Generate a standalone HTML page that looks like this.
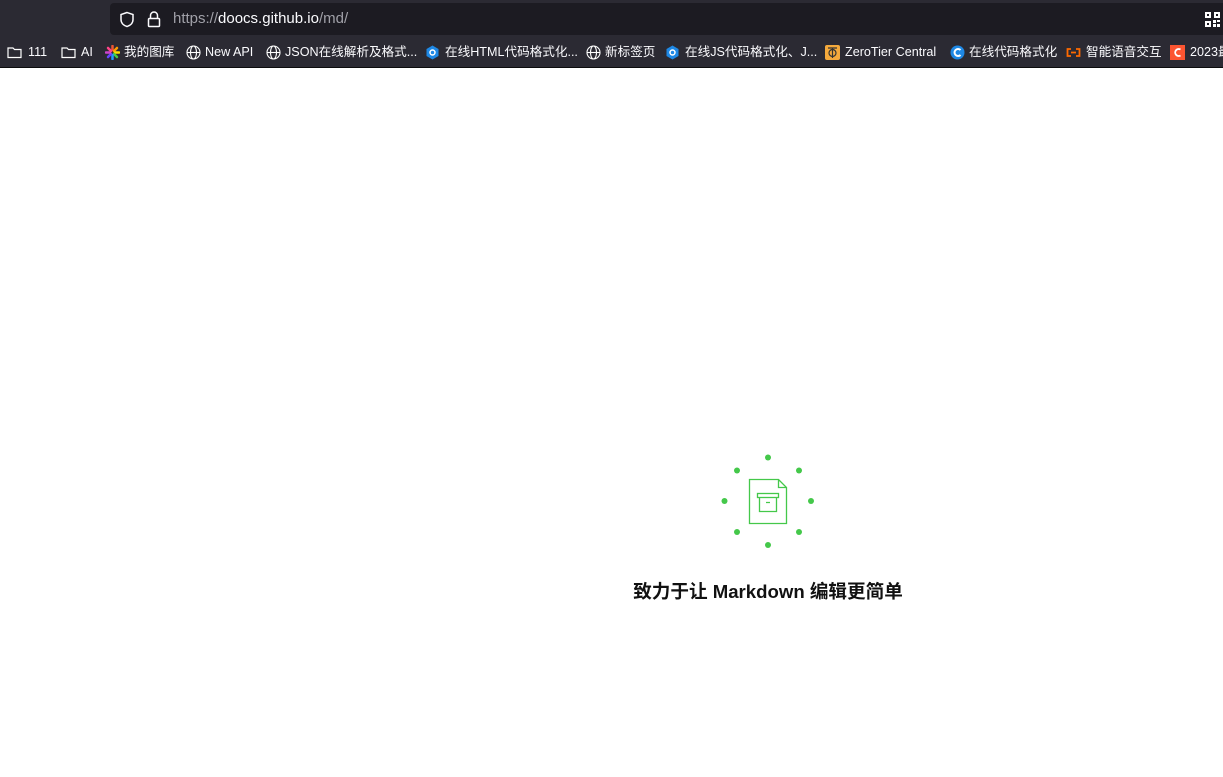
<!DOCTYPE html>
<html><head><meta charset="utf-8"><style>
*{margin:0;padding:0;box-sizing:border-box}
body{width:1223px;height:777px;background:#fff;font-family:"Liberation Sans","Noto Sans CJK SC",sans-serif;position:relative;overflow:hidden}
#top{position:absolute;left:0;top:0;width:1223px;height:36px;background:#2b2a33}
#url{position:absolute;left:110px;top:3px;width:1113px;height:32px;background:#1c1b22;border-radius:4px 0 0 4px}
#url .t{position:absolute;left:63px;top:7px;font-size:15px;line-height:18px;color:#fbfbfe}
#url .t span{color:#a0a0a8}
#bm{position:absolute;left:0;top:36px;width:1223px;height:32px;background:#2b2a33;border-bottom:1px solid #0c0c0d}
.b{position:absolute;top:8px;height:16px;line-height:16px;font-size:12.6px;color:#fbfbfe;white-space:nowrap;font-family:"Liberation Sans","Noto Sans CJK SC",sans-serif}
.ic{position:absolute;top:9px;width:15px;height:15px}
#msg{position:absolute;left:0;width:1536px;text-align:center;top:580px;line-height:24px;font-size:18.6px;font-weight:bold;color:#111}
</style></head><body>
<div id="top"><div id="url">
<svg style="position:absolute;left:9px;top:8px" width="16" height="17" viewBox="0 0 16 17"><path d="M8 1.5L2 3.5v5c0 3.5 2.6 6 6 7 3.4-1 6-3.5 6-7v-5z" fill="none" stroke="#fbfbfe" stroke-width="1.5"/></svg>
<svg style="position:absolute;left:37px;top:8px" width="14" height="17" viewBox="0 0 14 17"><path d="M3.5 7V4.5a3.5 3.5 0 017 0V7" fill="none" stroke="#fbfbfe" stroke-width="1.5"/><rect x="1.5" y="7.5" width="11" height="8" rx="1" fill="none" stroke="#fbfbfe" stroke-width="1.5"/></svg>
<div class="t"><span>https://</span>doocs.github.io<span>/md/</span></div>
<svg style="position:absolute;left:1095px;top:9px" width="15" height="15" viewBox="0 0 15 15" fill="#fff"><rect x="0" y="0" width="6" height="6"/><rect x="9" y="0" width="6" height="6"/><rect x="0" y="9" width="6" height="6"/><rect x="8" y="8" width="3" height="3"/><rect x="12" y="12" width="3" height="3"/><rect x="12" y="8" width="3" height="2"/><rect x="8" y="12" width="3" height="3"/><rect x="2" y="2" width="2" height="2" fill="#1c1b22"/><rect x="11" y="2" width="2" height="2" fill="#1c1b22"/><rect x="2" y="11" width="2" height="2" fill="#1c1b22"/></svg>
</div></div>
<div id="bm">
<svg class="ic" style="left:7px" viewBox="0 0 15 15"><path d="M1 3h5l1.5 1.5H14v8H1z" fill="none" stroke="#fff" stroke-width="1.2"/></svg><div class="b" style="left:28px">111</div>
<svg class="ic" style="left:61px" viewBox="0 0 15 15"><path d="M1 3h5l1.5 1.5H14v8H1z" fill="none" stroke="#fff" stroke-width="1.2"/></svg><div class="b" style="left:81px">AI</div>
<svg class="ic" style="left:105px" viewBox="0 0 15 15"><g stroke-width="2.5" stroke-linecap="round"><path d="M7.5 1v4" stroke="#e53"/><path d="M12 3l-3 3" stroke="#f90"/><path d="M14 7.5h-4" stroke="#fd0"/><path d="M12 12l-3-3" stroke="#4c4"/><path d="M7.5 14v-4" stroke="#29f"/><path d="M3 12l3-3" stroke="#64f"/><path d="M1 7.5h4" stroke="#c4c"/><path d="M3 3l3 3" stroke="#f48"/></g></svg><div class="b" style="left:124px">我的图库</div>
<svg class="ic" style="left:186px" viewBox="0 0 15 15"><g fill="none" stroke="#fff" stroke-width="1.1"><circle cx="7.5" cy="7.5" r="6.5"/><ellipse cx="7.5" cy="7.5" rx="3" ry="6.5"/><path d="M1 7.5h13"/></g></svg><div class="b" style="left:205px">New API</div>
<svg class="ic" style="left:266px" viewBox="0 0 15 15"><g fill="none" stroke="#fff" stroke-width="1.1"><circle cx="7.5" cy="7.5" r="6.5"/><ellipse cx="7.5" cy="7.5" rx="3" ry="6.5"/><path d="M1 7.5h13"/></g></svg><div class="b" style="left:285px">JSON在线解析及格式...</div>
<svg class="ic" style="left:425px" viewBox="0 0 15 15"><path d="M7.5 0.5l6 3.5v7l-6 3.5-6-3.5v-7z" fill="#1e88e5"/><circle cx="7.5" cy="7.5" r="2.5" fill="none" stroke="#fff" stroke-width="1.5"/></svg><div class="b" style="left:445px">在线HTML代码格式化...</div>
<svg class="ic" style="left:586px" viewBox="0 0 15 15"><g fill="none" stroke="#fff" stroke-width="1.1"><circle cx="7.5" cy="7.5" r="6.5"/><ellipse cx="7.5" cy="7.5" rx="3" ry="6.5"/><path d="M1 7.5h13"/></g></svg><div class="b" style="left:605px">新标签页</div>
<svg class="ic" style="left:665px" viewBox="0 0 15 15"><path d="M7.5 0.5l6 3.5v7l-6 3.5-6-3.5v-7z" fill="#1e88e5"/><circle cx="7.5" cy="7.5" r="2.5" fill="none" stroke="#fff" stroke-width="1.5"/></svg><div class="b" style="left:685px">在线JS代码格式化、J...</div>
<svg class="ic" style="left:825px" viewBox="0 0 15 15"><rect width="15" height="15" rx="2" fill="#f4a93c"/><circle cx="7.5" cy="8" r="3.5" fill="none" stroke="#333" stroke-width="1.2"/><path d="M3 3h9M7.5 3v10" stroke="#333" stroke-width="1.2"/></svg><div class="b" style="left:845px">ZeroTier Central</div>
<svg class="ic" style="left:950px" viewBox="0 0 15 15"><circle cx="7.5" cy="7.5" r="7" fill="#1e88e5"/><path d="M10.5 5a3.5 3.5 0 100 5" fill="none" stroke="#fff" stroke-width="2"/></svg><div class="b" style="left:969px">在线代码格式化</div>
<svg class="ic" style="left:1066px" viewBox="0 0 15 15"><path d="M5 4H1.5v7H5M10 4h3.5v7H10M5 7.5h5" fill="none" stroke="#ff6a00" stroke-width="1.8"/></svg><div class="b" style="left:1086px">智能语音交互</div>
<svg class="ic" style="left:1170px" viewBox="0 0 15 15"><rect width="15" height="15" fill="#fc5531"/><path d="M10.5 4.5a3.5 3.5 0 100 6" fill="none" stroke="#fff" stroke-width="1.8"/></svg><div class="b" style="left:1190px">2023最</div>
</div>
<svg style="position:absolute;left:718px;top:451px" width="100" height="100" viewBox="718 451 100 100">
<g fill="#44c84a"><circle cx="768" cy="457.5" r="3"/><circle cx="799" cy="470.5" r="3"/><circle cx="811" cy="501" r="3"/><circle cx="799" cy="532" r="3"/><circle cx="768" cy="545" r="3"/><circle cx="737" cy="532" r="3"/><circle cx="724.5" cy="501" r="3"/><circle cx="737" cy="470.5" r="3"/></g>
<g fill="none" stroke="#44c84a" stroke-width="1.3"><path d="M749.5 479.5h29l8 8v36h-37z"/><path d="M778.5 479.5v8h8"/><rect x="757.5" y="493.5" width="21" height="4"/><path d="M759.5 497.5v14h17v-14M766 502.5h4"/></g>
</svg>
<div id="msg">致力于让 Markdown 编辑更简单</div>
</body></html>
